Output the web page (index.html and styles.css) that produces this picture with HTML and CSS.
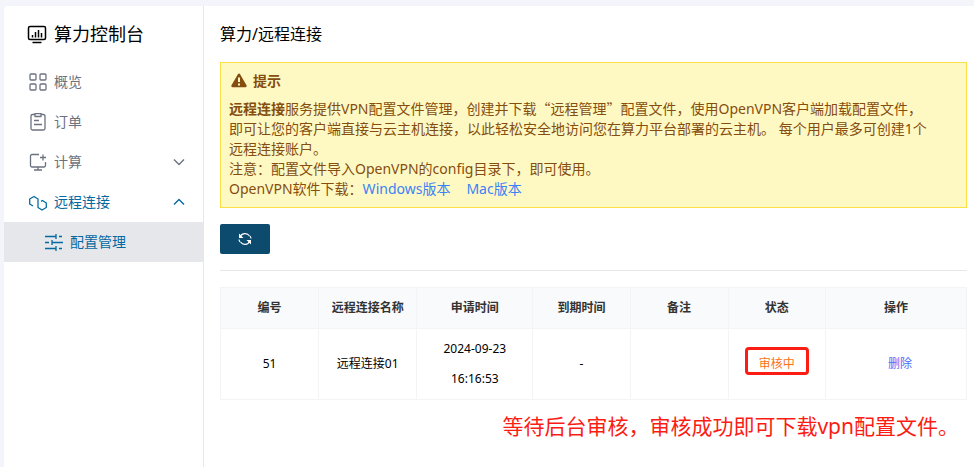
FILE: index.html
```html
<!DOCTYPE html>
<html lang="zh-CN">
<head>
    <meta charset="utf-8">
    <meta name="viewport" content="width=device-width, initial-scale=1">
    <title>算力控制台</title>
    <link rel="stylesheet" href="styles.css">
</head>
<body>
    <div class="layout">
        <aside class="sidebar">
            <div class="brand">
                <svg class="icon brand-icon" viewBox="0 0 20 20">
                    <rect x="1.500" y="2.500" width="17" height="13" rx="1.500"/>
                    <path d="M5.500 13.500V11M8.500 13.500V8M11.500 13.500V6M14.500 13.500V9M5.500 18.500h9"/>
                </svg>
                <span>算力控制台</span>
            </div>
            <nav class="menu">
                <a class="menu-item" href="#">
                    <svg class="icon" viewBox="0 0 18 18">
                        <rect x="1" y="1" width="6" height="6" rx="1"/>
                        <rect x="11" y="1" width="6" height="6" rx="1"/>
                        <rect x="1" y="11" width="6" height="6" rx="1"/>
                        <rect x="11" y="11" width="6" height="6" rx="1"/>
                    </svg>
                    <span>概览</span>
                </a>
                <a class="menu-item" href="#">
                    <svg class="icon" viewBox="0 0 18 18">
                        <path d="M6 1.500H3.500a1.500 1.500 0 0 0-1.500 1.500v12.500a1.500 1.500 0 0 0 1.500 1.500h11a1.500 1.500 0 0 0 1.500-1.500V3a1.500 1.500 0 0 0-1.500-1.500H12M6 .5h6v3H6zM5 7.500h5M5 11.500h8"/>
                    </svg>
                    <span>订单</span>
                </a>
                <button class="menu-item" type="button" aria-expanded="false">
                    <svg class="icon" viewBox="0 0 18 18">
                        <path d="M10 1.500H3A1.500 1.500 0 0 0 1.500 3v9.500A1.500 1.500 0 0 0 3 14h12a1.500 1.500 0 0 0 1.500-1.500V9M14 1.500v6M11 4.500h6M9 14v3M5 17h8"/>
                    </svg>
                    <span>计算</span>
                    <svg class="arrow" viewBox="0 0 12 12"><path d="M1 3.500l5 5 5-5"/></svg>
                </button>
                <button class="menu-item open" type="button" aria-expanded="true">
                    <svg class="icon" viewBox="0 0 18 18">
                        <path d="M4 13L.7 11V6L5 3.500 9 6v8.500l4 2.500 4.300-2.500V10l-3.800-2.500L12 8.400"/>
                    </svg>
                    <span>远程连接</span>
                    <svg class="arrow" viewBox="0 0 12 12"><path d="M1 8.500l5-5 5 5"/></svg>
                </button>
                <a class="menu-item sub active" href="#" aria-current="page">
                    <svg class="icon" viewBox="0 0 18 18">
                        <path d="M0 3.500h11M11 1v5M14 3.500h3M0 9.500h4M7 7v5M7 9.500h11M0 15.500h11M11 13v5M14 15.500h3"/>
                    </svg>
                    <span>配置管理</span>
                </a>
            </nav>
        </aside>

        <main class="content">
            <h1>算力/远程连接</h1>

            <div class="alert">
                <div class="alert-title">
                    <svg class="alert-icon" viewBox="0 0 16 16">
                        <path class="sign" d="M6.900 1.200a1.300 1.300 0 0 1 2.200 0l6.400 11a1.300 1.300 0 0 1-1.100 2H1.600a1.300 1.300 0 0 1-1.100-2z"/>
                        <path class="mark" d="M7 4.500h2v4.500H7zM7 10.500h2v2H7z"/>
                    </svg>
                    <span>提示</span>
                </div>
                <p>
                    <b>远程连接</b>服务提供VPN配置文件管理，创建并下载<span class="quote">“远程管理”</span>配置文件，使用OpenVPN客户端加载配置文件，<br>
                    即可让您的客户端直接与云主机连接，以此轻松安全地访问您在算力平台部署的云主机。 每个用户最多可创建1个<br>
                    远程连接账户。
                </p>
                <p>注意：配置文件导入OpenVPN的config目录下，即可使用。</p>
                <p>OpenVPN软件下载：<a class="download" href="#">Windows版本</a><a class="download" href="#">Mac版本</a></p>
            </div>

            <button class="refresh" type="button" aria-label="刷新">
                <svg viewBox="0 0 14 14">
                    <path d="M2 5.500A5.300 5.300 0 0 1 11.500 4M12 8.500A5.300 5.300 0 0 1 2.500 10M1 7.500a6 6 0 0 0 1 2.500M13 6.500a6 6 0 0 0-1-2.500"/>
                    <path class="head" d="M1 1.500v4.500h4.500zM13 12.500V8H8.500z"/>
                </svg>
            </button>

            <hr>

            <table>
                <colgroup>
                    <col class="col-id">
                    <col class="col-name">
                    <col class="col-apply">
                    <col class="col-expire">
                    <col class="col-note">
                    <col class="col-status">
                    <col class="col-action">
                </colgroup>
                <thead>
                    <tr>
                        <th>编号</th>
                        <th>远程连接名称</th>
                        <th>申请时间</th>
                        <th>到期时间</th>
                        <th>备注</th>
                        <th>状态</th>
                        <th>操作</th>
                    </tr>
                </thead>
                <tbody>
                    <tr>
                        <td>51</td>
                        <td>远程连接01</td>
                        <td>2024-09-23<br>16:16:53</td>
                        <td>-</td>
                        <td></td>
                        <td><span class="status">审核中</span></td>
                        <td><a class="delete" href="#">删除</a></td>
                    </tr>
                </tbody>
            </table>

            <p class="note">等待后台审核，审核成功即可下载vpn配置文件。</p>
        </main>
    </div>
</body>
</html>
```
FILE: styles.css
```css
* { box-sizing: border-box; }
body { margin: 0; padding: 6px 0 0 4px; background: #f4f5fa; color: #000; font-family: "Noto Sans", "Noto Sans CJK SC", sans-serif; font-size: 14px; line-height: 20px; }
h1, p { margin: 0; }
a { text-decoration: none; }
svg { flex: none; fill: none; stroke: currentColor; stroke-linejoin: round; }

/* Каркас */
.layout { display: flex; min-height: calc(100vh - 6px); background: #fff; border-top-left-radius: 4px; }
.sidebar { flex: 0 0 200px; border-right: 1px solid #e5e7eb; }
.content { flex: 1; min-width: 0; padding: 0 7px 16px 16px; }

/* Боковое меню */
.brand { display: flex; align-items: center; gap: 7px; height: 56px; padding-left: 23px; font-size: 18px; }
.icon { width: 18px; height: 18px; stroke-width: 1.3; }
.brand-icon { width: 20px; height: 20px; stroke-width: 1.5; }
.menu { display: flex; flex-direction: column; }
.menu-item { display: flex; align-items: center; gap: 7px; height: 40px; padding: 0 18px 0 25px; border: 0; background: none; color: #6b7280; font: inherit; text-align: left; cursor: pointer; }
.menu-item.open, .menu-item.active { color: #0369a1; }
.menu-item.active { background: #e5e7eb; }
.menu-item.sub { padding-left: 41px; }
.arrow { width: 12px; height: 12px; margin-left: auto; stroke-width: 1.4; }

/* Содержимое */
h1 { font-size: 16px; font-weight: normal; line-height: 56px; }
hr { height: 1px; margin: 16px 0; border: 0; background: #e5e7eb; }

.alert { padding: 8px; border: 1px solid #fde047; background: #fef9c3; color: #854d0e; }
.alert-title { display: flex; align-items: center; gap: 6px; margin-bottom: 8px; padding-left: 2px; font-weight: bold; }
.alert-icon { width: 16px; height: 16px; stroke: none; }
.alert-icon .sign { fill: #854d0e; }
.alert-icon .mark { fill: #fef9c3; }
.quote { font-family: "Noto Sans CJK SC", sans-serif; line-height: 1; }
.download { margin-right: 16px; color: #3b82f6; }

.refresh { display: flex; align-items: center; justify-content: center; width: 50px; height: 30px; margin-top: 16px; padding: 0; border: 0; border-radius: 2px; background: #0c4a6e; color: #fff; cursor: pointer; }
.refresh svg { width: 14px; height: 14px; stroke-width: 1.2; }
.refresh .head { fill: #fff; stroke: none; }

/* Таблица */
table { width: 100%; border-collapse: collapse; table-layout: fixed; font-size: 12px; line-height: 30px; text-align: center; }
th, td { padding: 5px 8px; border: 1px solid #f3f4f6; }
th { background: #f8fafc; color: #333; font-weight: bold; }
.col-id, .col-name, .col-note { width: 98px; }
.col-expire, .col-status { width: 97px; }
.col-apply { width: 116px; }
.col-action { width: 141px; }
.status { position: relative; color: #f97316; }
.status::after { content: ""; position: absolute; inset: -8px -14px -3px; border: 3px solid #fb1d14; border-radius: 4px; }
.delete { margin-left: 8px; color: #4f6bf6; }

.note { margin-top: 10px; padding-right: 8px; color: #fb1d14; font-size: 21px; line-height: 32px; text-align: right; }
```
